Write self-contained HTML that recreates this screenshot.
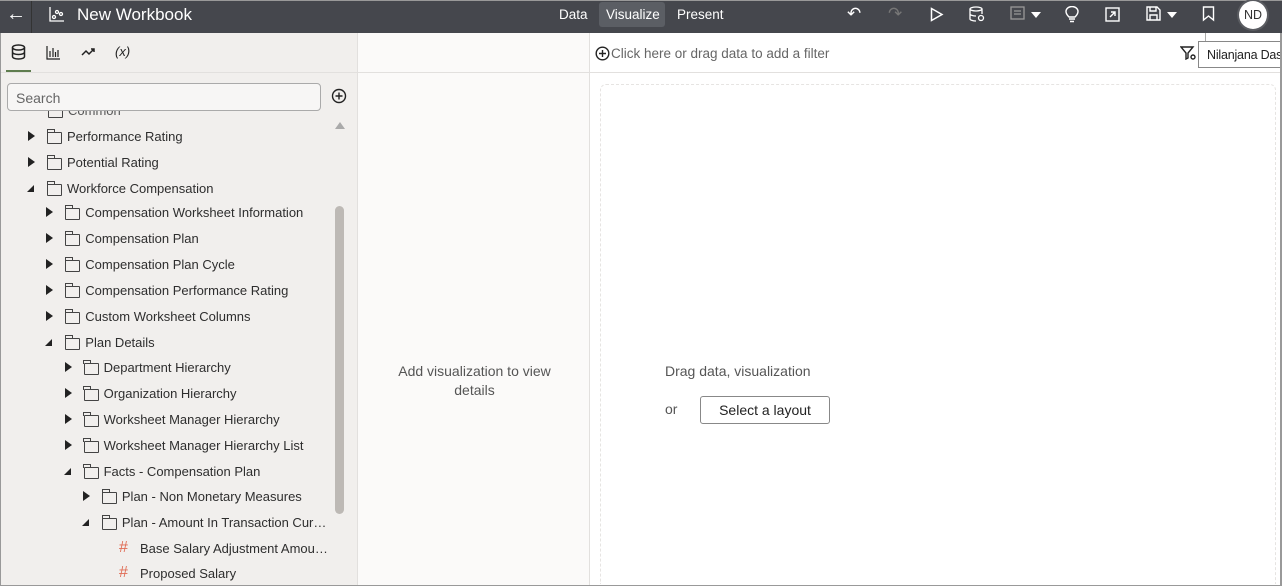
<!DOCTYPE html>
<html><head><style>
*{margin:0;padding:0;box-sizing:border-box}
html,body{width:1282px;height:586px;overflow:hidden}
body{font-family:"Liberation Sans",sans-serif;background:#fff;position:relative}
.hdr{position:absolute;left:0;top:0;width:1282px;height:33px;background:#45474d;color:#fff;border-top:1px solid #999}
.abs{position:absolute}
.left{position:absolute;left:0;top:33px;width:357px;height:553px;background:#f1efed;border-left:1px solid #999;border-bottom:1px solid #999;overflow:hidden}
.mid{position:absolute;left:357px;top:33px;width:233px;height:553px;background:#fbfaf9;border-left:1px solid #e2e0de;border-right:1px solid #e2e0de}
.row{position:absolute;font-size:13px;color:#2e2e2e;white-space:nowrap}
.tri{position:absolute;width:0;height:0}
.tr{border-top:5px solid transparent;border-bottom:5px solid transparent;border-left:7px solid #222}
.td{border-left:7px solid transparent;border-bottom:7px solid #222}
.fold{position:absolute;width:15px;height:12px;border:1.3px solid #444;border-radius:1px}
.fold:before{content:"";position:absolute;left:-1.3px;top:-4px;width:6px;height:3px;border:1.3px solid #444;border-bottom:none}
</style></head><body>
<div class="hdr">
 <div class="abs" style="left:6px;top:2px;font-size:20px">←</div>
 <div class="abs" style="left:31px;top:0;width:1px;height:33px;background:#333"></div>
 <svg class="abs" style="left:49px;top:5px" width="16" height="16" viewBox="0 0 16 16" fill="none" stroke="#fff" stroke-width="1.3"><path d="M1 1V15H15"/><circle cx="5" cy="11" r="1.5"/><circle cx="8" cy="6" r="1.5"/><circle cx="12" cy="8" r="1.5"/></svg>
 <div class="abs" style="left:77px;top:4px;font-size:17px">New Workbook</div>
 <div class="abs" style="left:559px;top:6px;font-size:13.5px">Data</div>
 <div class="abs" style="left:599px;top:1px;width:66px;height:25px;background:#5b5e64;border-radius:3px"></div>
 <div class="abs" style="left:606px;top:6px;font-size:13.5px">Visualize</div>
 <div class="abs" style="left:677px;top:6px;font-size:13.5px">Present</div>
 <div class="abs" style="left:847px;top:3px;font-size:17px">↶</div>
 <div class="abs" style="left:888px;top:3px;font-size:17px;color:#777">↷</div>
 <svg class="abs" style="left:930px;top:6px" width="14" height="15"><path d="M1.5 1.5L12 7.5L1.5 13.5Z" fill="none" stroke="#fff" stroke-width="1.5"/></svg>
 <svg class="abs" style="left:969px;top:5px" width="16" height="16" fill="none" stroke="#fff" stroke-width="1.3"><ellipse cx="7" cy="3" rx="6" ry="2"/><path d="M1 3V13C1 14 4 15 7 15M13 3V8M1 8C1 9 4 10 7 10"/><circle cx="12" cy="12" r="2.5"/></svg>
 <svg class="abs" style="left:1010px;top:5px" width="16" height="16" fill="none" stroke="#999" stroke-width="1.3"><rect x="1" y="1" width="13" height="12"/><path d="M4 5H11M4 8H11"/></svg>
 <div class="abs tri" style="left:1031px;top:11px;border-left:5px solid transparent;border-right:5px solid transparent;border-top:6px solid #fff"></div>
 <svg class="abs" style="left:1065px;top:5px" width="14" height="17" fill="none" stroke="#fff" stroke-width="1.4"><path d="M4 11C2 9 1 7 1 5.5A6 5 0 0 1 13 5.5C13 7 12 9 10 11Z M4 13H10M5 15.5H9"/></svg>
 <svg class="abs" style="left:1105px;top:6px" width="15" height="15" fill="none" stroke="#fff" stroke-width="1.4"><rect x="1" y="1" width="13" height="13"/><path d="M5 10L10 5M6 5H10V9"/></svg>
 <svg class="abs" style="left:1146px;top:5px" width="15" height="15" fill="none" stroke="#fff" stroke-width="1.4"><path d="M1 1H11L14 4V14H1Z M4 1V5H10V1 M4 14V9H11V14"/></svg>
 <div class="abs tri" style="left:1167px;top:11px;border-left:5px solid transparent;border-right:5px solid transparent;border-top:6px solid #fff"></div>
 <svg class="abs" style="left:1202px;top:5px" width="13" height="16" fill="none" stroke="#fff" stroke-width="1.4"><path d="M1.5 1H11.5V14L6.5 10L1.5 14Z"/></svg>
 <div class="abs" style="left:1239px;top:0;width:28px;height:28px;border-radius:50%;background:#fff;color:#333;font-size:12.5px;text-align:center;line-height:28px;box-shadow:0 0 0 2px #5a5c61">ND</div>
</div>
<div class="left">
 <svg class="abs" style="left:10px;top:11px" width="15" height="16" fill="none" stroke="#222" stroke-width="1.5"><ellipse cx="7.5" cy="3.5" rx="6" ry="2.5"/><path d="M1.5 3.5V12.5C1.5 14 4 15 7.5 15S13.5 14 13.5 12.5V3.5M1.5 8C1.5 9.5 4 10.5 7.5 10.5S13.5 9.5 13.5 8"/></svg>
 <div class="abs" style="left:5px;top:37px;width:25px;height:3px;background:#5f7d4f"></div>
 <svg class="abs" style="left:45px;top:12px" width="15" height="15" fill="none" stroke="#222" stroke-width="1.2"><path d="M1 1V14H14M4 12V6M7 12V3M9.5 12V7M12 12V5"/></svg>
 <svg class="abs" style="left:80px;top:14px" width="15" height="10" fill="none" stroke="#222" stroke-width="1.5"><path d="M1 8L5 4L8 7L13 2M10 2H13V5"/></svg>
 <div class="abs" style="left:114px;top:11px;font-size:13px;font-style:italic;color:#222">(x)</div>
 <div class="abs" style="left:0;top:39px;width:357px;height:1px;background:#e2e0de"></div>
 <div class="abs" style="left:0;top:78px;width:330px;height:475px;overflow:hidden">
  <div class="fold" style="left:47px;top:-5px"></div>
  <div class="row" style="left:67px;top:-8px;color:#555">Common</div>
 </div>
 <div class="abs" style="left:6px;top:50px;width:314px;height:28px;border:1px solid #aaa;border-radius:4px;background:#f7f6f5;font-size:14px;color:#666;padding:6px 8px">Search</div>
 <svg class="abs" style="left:330px;top:55px" width="16" height="16" fill="none" stroke="#222" stroke-width="1.4"><circle cx="8" cy="8" r="6.5"/><path d="M8 4.5V11.5M4.5 8H11.5"/></svg>
 <div class="abs tri" style="left:334px;top:89px;border-left:5px solid transparent;border-right:5px solid transparent;border-bottom:7px solid #aaa"></div>
 <div class="abs" style="left:334px;top:173px;width:9px;height:308px;background:#bdb9b5;border-radius:5px"></div>
</div>
<div id="tree"></div>
<div class="mid"><div class="abs" style="left:0;top:39px;width:233px;height:1px;background:#e2e0de"></div>
 <div class="abs" style="left:0;top:329px;width:233px;text-align:center;font-size:14px;color:#555;line-height:19px">Add visualization to view<br>details</div></div>
<div class="abs" style="left:590px;top:72px;width:692px;height:1px;background:#e2e0de"></div>
<svg class="abs" style="left:595px;top:46px" width="15" height="15" fill="none" stroke="#222" stroke-width="1.4"><circle cx="7.5" cy="7.5" r="6.3"/><path d="M7.5 4V11M4 7.5H11"/></svg>
<div class="abs" style="left:611px;top:46px;font-size:13.5px;color:#666">Click here or drag data to add a filter</div>
<svg class="abs" style="left:1180px;top:46px" width="16" height="14" fill="none" stroke="#222" stroke-width="1.4"><path d="M1 1H13L8 7V12L6 13V7Z"/><circle cx="13" cy="11" r="2"/></svg>
<div class="abs" style="left:1198px;top:41px;width:90px;height:27px;border:1px solid #888;background:#fff;font-size:12.5px;color:#222;padding:6px 0 0 8px;white-space:nowrap;letter-spacing:-0.2px">Nilanjana Das</div>
<div class="abs" style="left:1205px;top:33px;width:1px;height:8px;background:#aaa"></div>
<div class="abs" style="left:600px;top:84px;width:676px;height:500px;border:1px dashed #e6e4e2;border-bottom:none;border-radius:6px 6px 0 0"></div>
<div class="abs" style="left:665px;top:363px;font-size:14px;color:#555">Drag data, visualization</div>
<div class="abs" style="left:665px;top:401px;font-size:14px;color:#555">or</div>
<div class="abs" style="left:700px;top:396px;width:130px;height:28px;border:1px solid #888;border-radius:3px;font-size:14px;color:#222;text-align:center;line-height:26px">Select a layout</div>
<div class="abs" style="left:1280px;top:33px;width:2px;height:553px;background:#999"></div>
<div class="abs" style="left:357px;top:585px;width:925px;height:1px;background:#999"></div>
<script>
var d=[[0,'r','Performance Rating',136],[0,'r','Potential Rating',162],[0,'d','Workforce Compensation',188],
[1,'r','Compensation Worksheet Information',212],[1,'r','Compensation Plan',238],[1,'r','Compensation Plan Cycle',264],
[1,'r','Compensation Performance Rating',290],[1,'r','Custom Worksheet Columns',316],[1,'d','Plan Details',342],
[2,'r','Department Hierarchy',367],[2,'r','Organization Hierarchy',393],[2,'r','Worksheet Manager Hierarchy',419],
[2,'r','Worksheet Manager Hierarchy List',445],[2,'d','Facts - Compensation Plan',471],
[3,'r','Plan - Non Monetary Measures',496],[3,'d','Plan - Amount In Transaction Cur…',522],
[4,'h','Base Salary Adjustment Amou…',548],[4,'h','Proposed Salary',573]];
var h='';d.forEach(function(e){var o=e[0]*18.3,y=e[3];
if(e[1]=='h'){h+='<div class="row" style="left:119px;top:'+(y-9)+'px;color:#e06c55;font-size:16px">#</div><div class="row" style="left:140px;top:'+(y-7)+'px">'+e[2]+'</div>';return;}
if(e[1]=='r')h+='<div class="tri tr" style="left:'+(28+o)+'px;top:'+(y-5)+'px"></div>';
else h+='<div class="tri td" style="left:'+(27+o)+'px;top:'+(y-3)+'px"></div>';
h+='<div class="fold" style="left:'+(47+o)+'px;top:'+(y-4)+'px"></div><div class="row" style="left:'+(67+o)+'px;top:'+(y-7)+'px">'+e[2]+'</div>';});
document.getElementById('tree').innerHTML=h;
</script>
</body></html>
